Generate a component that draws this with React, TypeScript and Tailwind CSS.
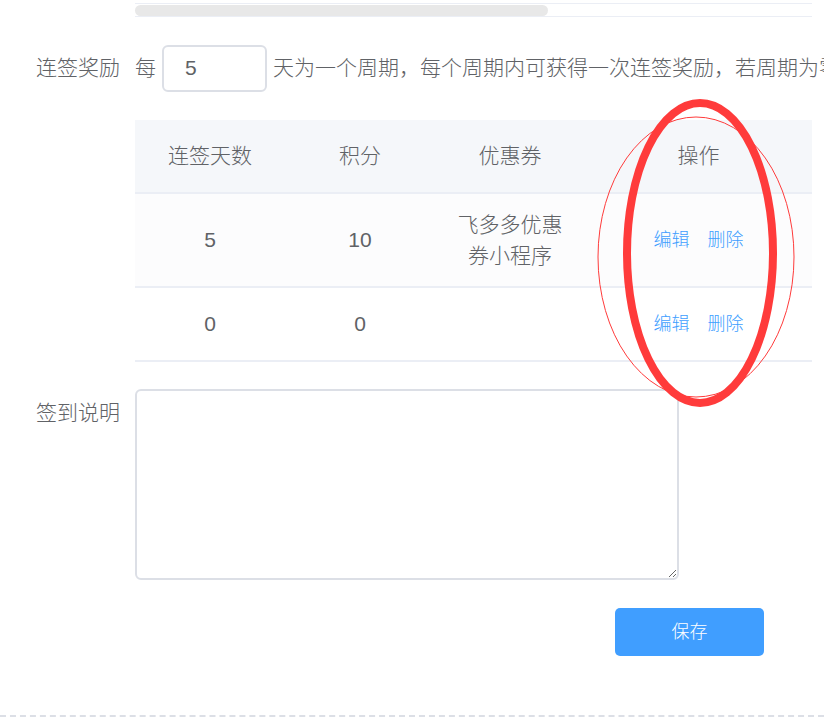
import React from "react"

type Reward = {
  days: string
  points: string
  coupon: string
}

const rewards: Reward[] = [
  { days: "5", points: "10", coupon: "飞多多优惠券小程序" },
  { days: "0", points: "0", coupon: "" },
]

const font = "font-['Liberation_Sans','Noto_Sans_CJK_SC',sans-serif]"

export default function App() {
  return (
    <div className={`relative w-[824px] h-[727px] overflow-hidden bg-white text-[#606266] font-light ${font}`}>
      {/* scrollbar of the table above */}
      <div className="pt-[3px] pl-[135px]">
        <div className="w-[677px] h-[14px] border-t border-b border-[#ebeef5] pt-[1px]">
          <div className="w-[413px] h-[11px] rounded-full bg-[#e8e8e8]" />
        </div>
      </div>

      {/* 连签奖励 */}
      <div className="flex mt-[27px]">
        <div className="w-[135px] shrink-0 pr-[15px] text-right text-[21px] leading-[48px]">连签奖励</div>
        <div className="flex items-center whitespace-nowrap text-[21px]">
          <span className="mr-[6px]">每</span>
          <div className="w-[105px] h-[47px] rounded-[6px] border-2 border-[#dcdfe6] flex items-center pl-[21px] text-[#606266]">
            5
          </div>
          <span className="ml-[6px]">天为一个周期，每个周期内可获得一次连签奖励，若周期为零则不循环</span>
        </div>
      </div>

      {/* table */}
      <div className="ml-[135px] mt-[28px] w-[677px] text-[21px]">
        <div className="grid grid-cols-[150px_150px_150px_227px] h-[74px] bg-[#f5f7fa] border-b-2 border-[#ebeef5] items-center text-center">
          <div>连签天数</div>
          <div>积分</div>
          <div>优惠券</div>
          <div>操作</div>
        </div>
        {rewards.map((r, i) => (
          <div
            key={i}
            className={`grid grid-cols-[150px_150px_150px_227px] items-center text-center border-b-2 border-[#ebeef5] ${
              i === 0 ? "h-[94px] bg-[#fcfcfd]" : "h-[74px] bg-white"
            }`}
          >
            <div>{r.days}</div>
            <div>{r.points}</div>
            <div className="px-[15px] leading-[31px]">{r.coupon}</div>
            <div className="flex justify-center gap-[18px] text-[18px] text-[#409eff]">
              <span>编辑</span>
              <span>删除</span>
            </div>
          </div>
        ))}
      </div>

      {/* 签到说明 */}
      <div className="flex mt-[27px]">
        <div className="w-[135px] shrink-0 pr-[15px] text-right text-[21px] leading-[48px]">签到说明</div>
        <textarea className="w-[544px] h-[191px] rounded-[6px] border-2 border-[#dcdfe6] outline-none resize" />
      </div>

      <div className="mt-[28px] ml-[615px]">
        <button className="w-[149px] h-[48px] rounded-[5px] bg-[#409eff] text-white text-[18px]">保存</button>
      </div>

      <div className="mt-[59px] border-t-2 border-dashed border-[#dcdfe6]" />

      {/* annotation */}
      <svg className="absolute left-0 top-0 pointer-events-none" width="824" height="727">
        <ellipse cx="696" cy="257" rx="98" ry="140" fill="none" stroke="#ff3b3b" strokeWidth="1" />
        <ellipse cx="700" cy="253" rx="73" ry="150" fill="none" stroke="#ff3b3b" strokeWidth="8" />
      </svg>
    </div>
  )
}
